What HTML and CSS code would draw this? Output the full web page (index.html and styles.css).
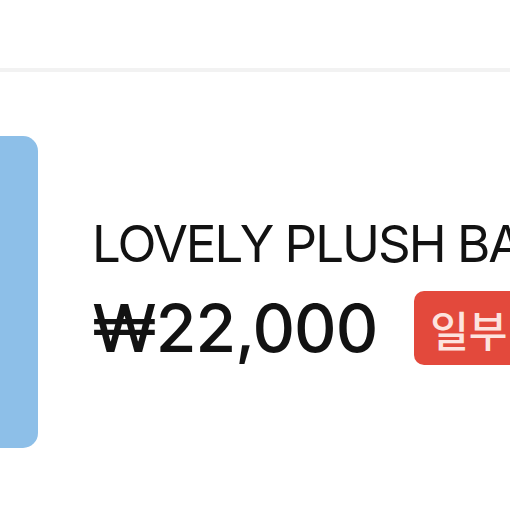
FILE: index.html
```html
<!DOCTYPE html>
<html lang="ko">
<head>
<meta charset="utf-8">
<title>Item</title>
<link rel="stylesheet" href="styles.css">
</head>
<body>
<div class="page">
  <div class="top"></div>
  <div class="divider"></div>
  <div class="item">
    <div class="thumb"></div>
    <div class="info">
      <div class="title">LOVELY PLUSH BAG</div>
      <div class="price-row">
        <span class="price">₩22,000</span>
        <span class="badge">일부 택포</span>
      </div>
    </div>
  </div>
</div>
</body>
</html>
```
FILE: styles.css
```css
html, body {
  margin: 0;
  padding: 0;
  background: #ffffff;
}
.page {
  width: 510px;
  height: 510px;
  overflow: hidden;
  background: #ffffff;
  font-family: Inter, "Noto Sans CJK KR", sans-serif;
  color: #121212;
}
.top {
  height: 68px;
}
.divider {
  height: 4px;
  background: #f2f2f2;
}
.item {
  display: flex;
  align-items: center;
  padding-top: 64px;
}
.thumb {
  flex-shrink: 0;
  width: 200px;
  height: 312px;
  margin-left: -162px;
  border-radius: 15px;
  background: #8dbfe8;
}
.info {
  margin-left: 54px;
  margin-top: -4px;
  white-space: nowrap;
  display: flex;
  flex-direction: column;
  gap: 16px;
}
.title {
  font-size: 51px;
  line-height: 60px;
  font-weight: 400;
  letter-spacing: -2px;
}
.price-row {
  display: flex;
  align-items: center;
}
.price {
  font-size: 66px;
  line-height: 76px;
  font-weight: 500;
  letter-spacing: -1px;
}
.badge {
  margin-left: 37px;
  height: 74px;
  display: inline-flex;
  align-items: center;
  padding: 0 16px;
  border-radius: 10px;
  background: #e3493c;
  color: #fde3df;
  font-size: 42px;
  font-weight: 500;
}
```
